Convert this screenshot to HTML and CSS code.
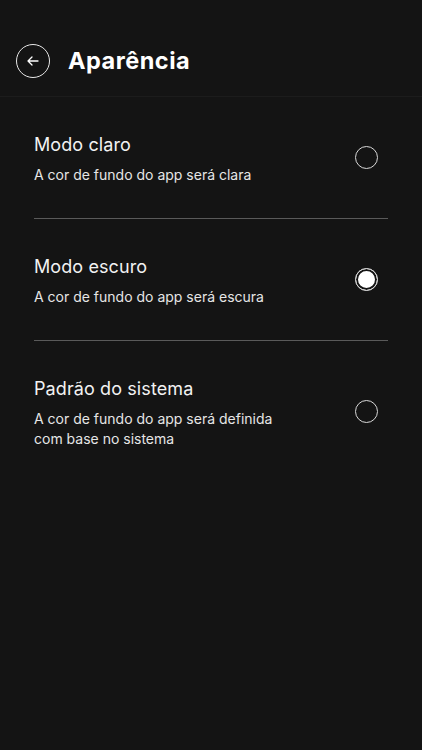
FILE: index.html
```html
<!DOCTYPE html>
<html lang="pt">
<head>
<meta charset="utf-8">
<link rel="stylesheet" href="styles.css">
</head>
<body>
<div class="screen">
  <header class="header">
    <button class="back" aria-label="Voltar">
      <svg width="14" height="14" viewBox="0 0 14 14" fill="none" stroke="#fff" stroke-width="1.3" stroke-linecap="round" stroke-linejoin="round"><path d="M12 7H2M6 3L2 7l4 4"/></svg>
    </button>
    <h1 class="title">Aparência</h1>
  </header>
  <main class="list">
    <div class="option">
      <div class="text">
        <div class="name">Modo claro</div>
        <div class="desc">A cor de fundo do app será clara</div>
      </div>
      <span class="radio"></span>
    </div>
    <div class="option">
      <div class="text">
        <div class="name">Modo escuro</div>
        <div class="desc">A cor de fundo do app será escura</div>
      </div>
      <span class="radio checked"></span>
    </div>
    <div class="option last">
      <div class="text">
        <div class="name">Padrão do sistema</div>
        <div class="desc">A cor de fundo do app será definida<br>com base no sistema</div>
      </div>
      <span class="radio"></span>
    </div>
  </main>
</div>
</body>
</html>
```
FILE: styles.css
```css
* { box-sizing: border-box; }
html, body { margin: 0; padding: 0; background: #141414; }
body { font-family: Inter, "Noto Sans", sans-serif; color: #fff; }
.screen { width: 422px; height: 750px; background: #141414; }
.header {
  display: flex; align-items: flex-start; gap: 18px;
  padding: 44px 16px 0 16px; height: 97px;
  border-bottom: 1px solid #1c1c1c;
}
.back {
  width: 34px; height: 34px; border-radius: 50%;
  border: 1.5px solid #e8e8e8; background: transparent;
  display: flex; align-items: center; justify-content: center; padding: 0;
}
.title { margin: 0; font-size: 23.5px; font-weight: 700; line-height: 34px; letter-spacing: 0.5px; }
.list { padding: 0 34px; }
.option {
  display: flex; align-items: center; justify-content: space-between;
  padding: 36px 0 33px; border-bottom: 1px solid #5a5a5a;
}
.option.last { border-bottom: none; }
.name { font-size: 18px; line-height: 24px; color: #f2f2f2; letter-spacing: 0.1px; }
.desc { font-size: 14px; line-height: 20px; color: #e6e6e6; margin-top: 8px; }
.radio {
  width: 23px; height: 23px; border-radius: 50%;
  border: 1.5px solid #d8d8d8; margin: 0 10px 4px 0; flex: none;
}
.radio.checked { background: #fff; box-shadow: inset 0 0 0 2px #141414; }
```
